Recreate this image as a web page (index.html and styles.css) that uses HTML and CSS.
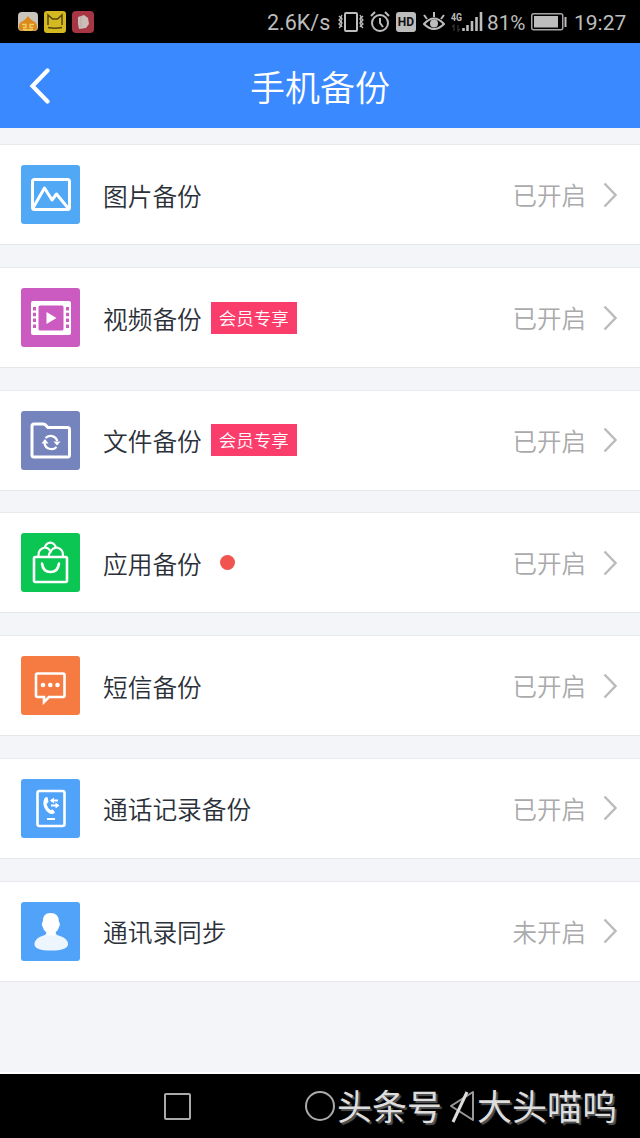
FILE: index.html
```html
<!DOCTYPE html>
<html lang="zh-CN">
<head>
    <meta charset="UTF-8">
    <meta name="viewport" content="width=device-width, initial-scale=1.0">
    <title>手机备份</title>
    <link rel="stylesheet" href="styles.css">
</head>
<body>
    <!-- 状态栏 -->
    <div class="status-bar">
        <div class="notices">
            <svg width="20" height="21" viewBox="0 0 20 21">
                <rect x="0" y="1" width="20" height="19" rx="4" fill="#c9c5bd"/>
                <path d="M1 18Q0 12 5 10Q8 8 10 5Q12 8 15 10Q20 12 19 18Q18 20 15 20H5Q2 20 1 18Z" fill="#dc8a1c"/>
                <path d="M4 13.500h4v3H5M16 13.500h-4v3h3M5 18.500q5 1 10 0" fill="none" stroke="#f0cf63" stroke-width="1.3"/>
            </svg>
            <svg width="22" height="22" viewBox="0 0 22 22">
                <rect width="22" height="22" rx="3" fill="#d5b922"/>
                <path d="M4 14V4l4.500 4h5L18 4v10M4 16.500q7 1.500 14 0" fill="none" stroke="#57450f" stroke-width="1.5"/>
            </svg>
            <svg width="22" height="22" viewBox="0 0 22 22">
                <rect width="22" height="22" rx="4" fill="#a83543"/>
                <path d="M6 6l6-2 4 3 1 6-3 4-7 1-1-5Z" fill="#cbbdb9"/>
                <path d="M9 5v11" stroke="#b9a3a0" stroke-width=".8"/>
            </svg>
        </div>
        <div class="system">
            <span class="speed">2.6K/s</span>
            <svg class="vibrate" width="26" height="22" viewBox="0 0 26 22" fill="none" stroke="#bdbdbd">
                <rect x="7" y="2" width="12" height="18" rx="1" stroke-width="2"/>
                <path d="M1 5l2 2-2 2 2 2-2 2 2 2-2 2M4 4l-1 2 1 2-1 2 1 2-1 2 1 2M25 5l-2 2 2 2-2 2 2 2-2 2 2 2M22 4l1 2-1 2 1 2-1 2 1 2-1 2" stroke-width="1.3"/>
            </svg>
            <svg class="alarm" width="20" height="22" viewBox="0 0 20 22" fill="none" stroke="#bdbdbd" stroke-width="2">
                <circle cx="10" cy="12" r="8"/>
                <path d="M10 7v5l3 4M1 5l4-4M19 5l-4-4"/>
            </svg>
            <span class="hd">HD</span>
            <svg class="eye" width="22" height="22" viewBox="0 0 22 22" fill="none" stroke="#bdbdbd" stroke-width="2">
                <path d="M1 13Q11 2 21 13Q11 23 1 13Z"/>
                <circle cx="11" cy="12.5" r="4" fill="#bdbdbd" stroke="none"/>
                <path d="M11 6V1M4 8L1 4M18 8l3-4"/>
            </svg>
            <svg class="signal" width="32" height="22" viewBox="0 0 32 22">
                <text x="0" y="9.5" class="network" textLength="11" lengthAdjust="spacingAndGlyphs">4G</text>
                <path d="M3 20v-6l-2 2M7 14v6l2-2" fill="none" stroke="#333" stroke-width="1.3"/>
                <path d="M12.500 20v-3M16.500 20v-6M21 20V10M25.500 20V6M30 20V1" stroke="#bdbdbd" stroke-width="2.6"/>
            </svg>
            <span class="percent">81%</span>
            <svg class="battery" width="36" height="18" viewBox="0 0 36 18">
                <rect x=".75" y=".75" width="31" height="16" rx="2" fill="none" stroke="#a5a5a5" stroke-width="1.5"/>
                <rect x="3" y="3" width="24" height="11.500" fill="#bdbdbd"/>
                <path d="M34.500 4v10" stroke="#bdbdbd" stroke-width="2"/>
            </svg>
            <span class="time">19:27</span>
        </div>
    </div>

    <header class="header">
        <svg class="back" width="22" height="38" viewBox="0 0 22 38">
            <path d="M19.500 3.500L4.500 19L19.500 34.500" fill="none" stroke="#fff" stroke-width="4.200" stroke-linecap="round"/>
        </svg>
        <h1>手机备份</h1>
    </header>

    <!-- 备份项目 -->
    <main class="list">
        <div class="row">
            <svg class="icon sky" viewBox="0 0 59 59">
                <rect x="11.500" y="14.500" width="37" height="30" rx="2"/>
                <path d="M12 43L23.500 23L31 35L35.500 29L47 43" stroke-linejoin="round"/>
            </svg>
            <span class="name">图片备份</span>
            <span class="state">已开启</span>
            <svg class="arrow" viewBox="0 0 14 26"><path d="M1.500 1.500L12.500 13L1.500 24.500"/></svg>
        </div>
        <div class="row">
            <svg class="icon purple" viewBox="0 0 59 59">
                <rect class="solid" x="10" y="13" width="40" height="34" rx="2"/>
                <rect class="cut" x="17.500" y="17.500" width="25" height="25" rx="1.500"/>
                <path class="holes" d="M13.500 19v22M46.500 19v22"/>
                <path class="solid" d="M25.500 24v12l10-6Z"/>
            </svg>
            <span class="name">视频备份</span>
            <span class="tag">会员专享</span>
            <span class="state">已开启</span>
            <svg class="arrow" viewBox="0 0 14 26"><path d="M1.500 1.500L12.500 13L1.500 24.500"/></svg>
        </div>
        <div class="row">
            <svg class="icon indigo" viewBox="0 0 59 59">
                <path d="M13 13h9q2 0 3 1.500l2 2h19.500q2 0 2 2V44q0 2-2 2H13q-2 0-2-2V15q0-2 2-2Z"/>
                <path class="thin" d="M24.500 27a7 7 0 0 1 11.800 3M35.500 36a7 7 0 0 1-12-4"/>
                <path class="solid" d="M32.500 30.500h7l-3.500 4ZM20.500 32.500h7l-3.500-4.500Z"/>
            </svg>
            <span class="name">文件备份</span>
            <span class="tag">会员专享</span>
            <span class="state">已开启</span>
            <svg class="arrow" viewBox="0 0 14 26"><path d="M1.500 1.500L12.500 13L1.500 24.500"/></svg>
        </div>
        <div class="row">
            <svg class="icon green" viewBox="0 0 59 59">
                <rect class="medium" x="13" y="24" width="33" height="25" rx="1.500"/>
                <path class="medium" d="M21 30.500q1 8.500 8.500 8.500t8.500-8.500" stroke-linecap="round"/>
                <g class="thin">
                    <path d="M17.500 24v-2q0-6 6-7.500 4 0 5.500 3.500M42 24v-2q0-6-6-7.500-5 .5-6.500 4.500-2 1.500-2 5"/>
                    <path d="M24 15a5.300 5.300 0 0 1 10.600 0"/>
                </g>
            </svg>
            <span class="name">应用备份</span>
            <span class="dot"></span>
            <span class="state">已开启</span>
            <svg class="arrow" viewBox="0 0 14 26"><path d="M1.500 1.500L12.500 13L1.500 24.500"/></svg>
        </div>
        <div class="row">
            <svg class="icon orange" viewBox="0 0 59 59">
                <path class="medium" d="M16.500 17.500h25.500q1.500 0 1.500 1.500v20.500q0 1.500-1.500 1.500H28l-5 5v-5h-6.500q-1.500 0-1.500-1.500V19q0-1.500 1.500-1.500Z"/>
                <g class="solid">
                    <circle cx="22" cy="29" r="2.300"/>
                    <circle cx="29.300" cy="29" r="2.300"/>
                    <circle cx="36.500" cy="29" r="2.300"/>
                </g>
            </svg>
            <span class="name">短信备份</span>
            <span class="state">已开启</span>
            <svg class="arrow" viewBox="0 0 14 26"><path d="M1.500 1.500L12.500 13L1.500 24.500"/></svg>
        </div>
        <div class="row">
            <svg class="icon azure" viewBox="0 0 59 59">
                <rect class="medium" x="16.500" y="12" width="27" height="35" rx="2"/>
                <path class="solid" d="M24 18.500l2.500-.5 1 5-2 2q1 4 4 6l2.500-.5 2 3q-2 2-4 1.500-6-2.500-7.500-9-.5-5 1.500-7.500Z"/>
                <path class="thin" d="M30 21.500h7M30 26.500h7M26 40h8"/>
                <path class="solid" d="M29 21.500l4-3v6ZM38.500 26.500l-4-3v6Z"/>
            </svg>
            <span class="name">通话记录备份</span>
            <span class="state">已开启</span>
            <svg class="arrow" viewBox="0 0 14 26"><path d="M1.500 1.500L12.500 13L1.500 24.500"/></svg>
        </div>
        <div class="row">
            <svg class="icon azure" viewBox="0 0 59 59">
                <path class="body" d="M13.500 42.500q0-6.500 9-9 3-1 3-3.500h9q0 2.500 3 3.500 9.500 2.500 9.500 9-1 6-17 6t-16.500-6Z"/>
                <path class="solid" d="M29.500 11q8.500 0 8.500 9 1.800 2 0 5-.8 3.500-3.500 5.500v3h-9v-3q-3-2-3.800-5.500-1.800-3 0-5-.2-9 7.800-9Z"/>
            </svg>
            <span class="name">通讯录同步</span>
            <span class="state">未开启</span>
            <svg class="arrow" viewBox="0 0 14 26"><path d="M1.500 1.500L12.500 13L1.500 24.500"/></svg>
        </div>
    </main>

    <!-- 底部导航 -->
    <footer class="nav">
        <span class="recent"></span>
        <span class="home"></span>
        <span class="mark">头条号</span>
        <svg class="prev" width="35" height="40" viewBox="0 0 35 40" fill="none">
            <path d="M31 6L9 20L31 34V6Z" stroke="#999" stroke-width="2" stroke-linejoin="round"/>
            <path d="M25 6L11 36" stroke="#ddd" stroke-width="3"/>
        </svg>
        <span class="mark">大头喵呜</span>
    </footer>
</body>
</html>
```
FILE: styles.css
```css
* {
    margin: 0;
    padding: 0;
    box-sizing: border-box;
}

body {
    font-family: "Noto Sans CJK SC", sans-serif;
    background-color: #f3f5f8;
    width: 640px;
    height: 1138px;
    overflow: hidden;
    display: flex;
    flex-direction: column;
}

svg {
    display: block;
    flex-shrink: 0;
}

/* 状态栏 */
.status-bar {
    height: 43px;
    flex-shrink: 0;
    background-color: #000;
    color: #bdbdbd;
    font-family: Roboto, sans-serif;
    font-size: 22px;
    display: flex;
    justify-content: space-between;
    align-items: center;
    padding: 0 15px 0 18px;
}

.notices,
.system {
    display: flex;
    align-items: center;
}

.notices {
    gap: 6px;
}

.system {
    line-height: 26px;
    padding-top: 1px;
}

.speed {
    width: 71px;
    font-size: 21.5px;
    padding-top: 1px;
}

.vibrate {
    margin-right: 6px;
}

.alarm {
    margin-right: 6px;
}

.hd {
    width: 20px;
    height: 20px;
    margin-right: 7px;
    border-radius: 3px;
    background-color: #bdbdbd;
    color: #111;
    font-size: 12px;
    font-weight: bold;
    line-height: 20px;
    text-align: center;
}

.eye {
    margin-right: 6px;
}

.signal {
    margin-right: 4px;
}

.network {
    font-size: 11px;
    font-weight: bold;
    fill: #bdbdbd;
}

.percent {
    width: 44px;
    font-size: 20.7px;
    padding-top: 2px;
}

.battery {
    margin-right: 7px;
}

.time {
    width: 51px;
    font-size: 21px;
    padding-top: 2px;
}

/* 标题栏 */
.header {
    height: 85px;
    flex-shrink: 0;
    background-color: #3a89ff;
    color: #fff;
    display: flex;
    align-items: center;
    padding: 0 28px;
}

.header h1 {
    flex: 1;
    margin-right: 22px;
    padding-top: 1px;
    font-size: 35px;
    font-weight: 350;
    line-height: 50px;
    text-align: center;
}

/* 列表 */
.list {
    flex: 1;
    padding-top: 16.4px;
    border-bottom: 2px solid #fff;
}

.row {
    height: 101px;
    margin-bottom: 21.7px;
    padding: 0 23px 0 21px;
    background-color: #fff;
    border-top: 1px solid #e8eaed;
    border-bottom: 1px solid #e5e7ea;
    display: flex;
    align-items: center;
}

.name {
    margin-left: 23px;
    color: #2b3039;
    font-size: 24.7px;
    font-weight: 350;
    line-height: 36px;
}

.tag {
    width: 86px;
    height: 32px;
    margin-left: 9px;
    background-color: #fb3d6c;
    color: #fff;
    font-size: 17.5px;
    font-weight: 350;
    line-height: 32px;
    text-align: center;
}

.dot {
    width: 15px;
    height: 15px;
    margin-left: 18px;
    border-radius: 50%;
    background-color: #f1544f;
}

.state {
    margin-left: auto;
    padding-top: 1px;
    color: #aaa;
    font-size: 24.5px;
    font-weight: 350;
    line-height: 36px;
}

.arrow {
    width: 14px;
    height: 26px;
    margin-left: 17px;
    fill: none;
    stroke: #bbb;
    stroke-width: 2.4;
}

/* 图标 */
.icon {
    width: 59px;
    height: 59px;
    border-radius: 3px;
    fill: none;
    stroke: #fff;
    stroke-width: 3;
}

.icon .medium {
    stroke-width: 2.6;
}

.icon .thin {
    stroke-width: 2.2;
}

.icon .solid {
    fill: #fff;
    stroke: none;
}

.icon .body {
    fill: #edf6ff;
    stroke: none;
}

.icon .cut {
    fill: #cb5bc0;
    stroke: none;
}

.icon .holes {
    stroke: #cb5bc0;
    stroke-dasharray: 3.500 2.300;
}

.sky { background-color: #51a9f5; }
.purple { background-color: #cb5bc0; }
.indigo { background-color: #7684bd; }
.green { background-color: #0bc653; }
.orange { background-color: #f67b42; }
.azure { background-color: #50a3f9; }

/* 底部导航 */
.nav {
    height: 64px;
    flex-shrink: 0;
    background-color: #000;
    display: flex;
    align-items: center;
    padding-left: 164px;
}

.recent {
    width: 27px;
    height: 27px;
    border: 2px solid #aaa;
    border-radius: 2px;
}

.home {
    width: 30px;
    height: 30px;
    margin: 0 2px 0 114px;
    border: 2px solid #aaa;
    border-radius: 50%;
}

.mark {
    padding-bottom: 3px;
    color: #ddd;
    font-size: 35px;
    line-height: 50px;
    text-shadow: 2px 2px 1px #555;
}
```
